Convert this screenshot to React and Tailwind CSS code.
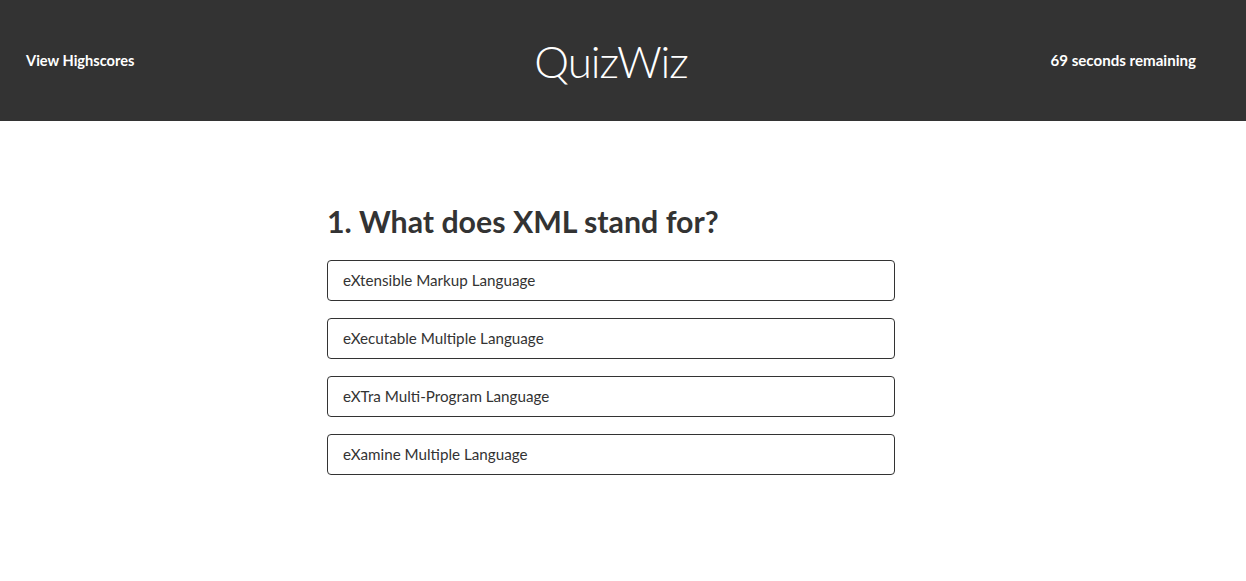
const answers = [
  "eXtensible Markup Language",
  "eXecutable Multiple Language",
  "eXTra Multi-Program Language",
  "eXamine Multiple Language",
];

export default function App() {
  return (
    <div className="min-h-[581px] bg-white font-['Lato',sans-serif] text-[#333]">
      <header className="flex h-[121px] items-center justify-between bg-[#333] pl-[26px] pr-[50px] text-white">
        <a href="#" className="w-[180px] text-[14.6px] font-bold">
          View Highscores
        </a>
        <h1 className="text-[44px] font-light tracking-tight">QuizWiz</h1>
        <span className="w-[180px] text-right text-[15.1px] font-bold">
          69 seconds remaining
        </span>
      </header>

      <div className="w-[1222px]">
        <main className="mx-auto w-[568px] pt-[78px]">
          <h2 className="text-[30.3px] font-bold leading-[44px]">
            1. What does XML stand for?
          </h2>
          <ul className="mt-[17px] flex flex-col gap-[17px]">
            {answers.map((a) => (
              <li key={a}>
                <button
                  type="button"
                  className="flex h-[41px] w-full items-center rounded-[4px] border border-[#333] px-[15px] text-left text-[15.2px]"
                >
                  {a}
                </button>
              </li>
            ))}
          </ul>
        </main>
      </div>
    </div>
  );
}
